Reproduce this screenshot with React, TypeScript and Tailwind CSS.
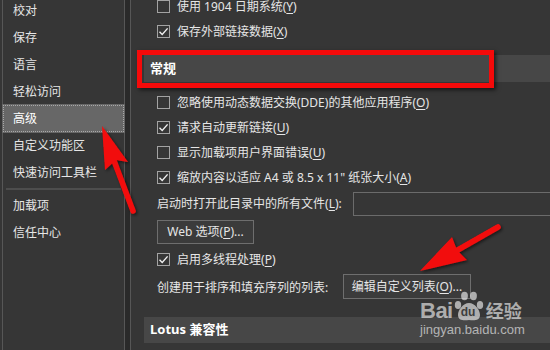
import React from "react";

const FONT = { fontFamily: '"Noto Sans", "Noto Sans CJK SC", sans-serif' };

const navItems = [
  "校对",
  "保存",
  "语言",
  "轻松访问",
  "高级",
  "自定义功能区",
  "快速访问工具栏",
  "---",
  "加载项",
  "信任中心",
];

function Check({ checked }: { checked?: boolean }) {
  return (
    <div className="flex h-[13px] w-[13px] shrink-0 items-center justify-center border border-[#a3a3a3] bg-[#363636]">
      {checked && (
        <svg width="11" height="11" viewBox="0 0 11 11">
          <path d="M1.5 5.8 L4.2 8.4 L9.6 2.4" fill="none" stroke="#f2f2f2" strokeWidth="1.4" />
        </svg>
      )}
    </div>
  );
}

function Row({
  checked,
  children,
  className = "",
}: {
  checked?: boolean;
  children: React.ReactNode;
  className?: string;
}) {
  return (
    <div className={`flex h-[25px] items-center gap-[7px] pl-[26px] ${className}`}>
      <Check checked={checked} />
      <span className="whitespace-nowrap">{children}</span>
    </div>
  );
}

function Key({ k }: { k: string }) {
  return (
    <>
      (<u className="underline-offset-2">{k}</u>)
    </>
  );
}

function SectionBar({ title, className = "" }: { title: string; className?: string }) {
  return (
    <div className={`ml-[13px] flex items-center bg-[#474747] pl-[6px] text-[13px] font-bold text-white ${className}`}>
      {title}
    </div>
  );
}

function Arrows() {
  return (
    <svg
      className="pointer-events-none absolute inset-0"
      width="550"
      height="350"
      viewBox="0 0 550 350"
    >
      <defs>
        <filter id="sh" x="-20%" y="-20%" width="140%" height="140%">
          <feDropShadow dx="1.5" dy="1.5" stdDeviation="1.5" floodColor="#000" floodOpacity="0.55" />
        </filter>
      </defs>
      <g filter="url(#sh)" fill="#f20d0d">
        <line x1="133" y1="211" x2="113" y2="158" stroke="#f20d0d" strokeWidth="5.5" strokeLinecap="round" />
        <polygon points="102,126 128,162 116,160 105,170" />
        <line x1="498" y1="227" x2="456" y2="251" stroke="#f20d0d" strokeWidth="5.5" strokeLinecap="round" />
        <polygon points="420,271 452,237 457,250 467,260" />
      </g>
    </svg>
  );
}

function Watermark() {
  return (
    <div className="pointer-events-none absolute left-[420px] top-[290px] flex flex-col text-white/60">
      <div className="flex items-end">
        <span className="text-[22px] font-bold leading-[22px] tracking-[-0.5px]" style={{ fontFamily: '"Liberation Sans", sans-serif' }}>
          Bai
        </span>
        <div className="relative h-[32px] w-[32px]">
          <svg width="32" height="32" viewBox="0 0 32 32" className="absolute inset-0">
            <g fill="rgba(255,255,255,0.6)">
              <ellipse cx="5" cy="15" rx="3.2" ry="4" />
              <ellipse cx="11.5" cy="6" rx="3.4" ry="4.2" />
              <ellipse cx="20.5" cy="6" rx="3.4" ry="4.2" />
              <ellipse cx="27" cy="15" rx="3.2" ry="4" />
              <path d="M16 13 C10 13 5 20 5 25 C5 30 10 31 16 30 C22 31 27 30 27 25 C27 20 22 13 16 13 Z" />
            </g>
          </svg>
          <span
            className="absolute left-[8px] top-[16px] text-[12px] font-bold leading-[12px] text-[#3e3e3e]"
            style={{ fontFamily: '"Liberation Sans", sans-serif' }}
          >
            du
          </span>
        </div>
        <span className="ml-[1px] text-[18px] font-bold leading-[22px]">经验</span>
      </div>
      <span className="mt-[1px] text-[13px] leading-[14px]" style={{ fontFamily: '"Liberation Sans", sans-serif' }}>
        jingyan.baidu.com
      </span>
    </div>
  );
}

export default function App() {
  return (
    <div
      className="relative flex h-[350px] w-[550px] overflow-hidden bg-[#363636] text-[12px] text-[#e6e6e6]"
      style={FONT}
    >
      {/* sidebar */}
      <div className="ml-[2px] flex w-[123px] shrink-0 flex-col border-x border-[#575757] bg-[#363636]">
        <div className="-mt-[3px]" />
        {navItems.map((item, i) =>
          item === "---" ? (
            <div key={i} className="mx-[3px] my-[2px] h-[2px] bg-[#4d4d4d]" />
          ) : item === "高级" ? (
            <div key={i} className="h-[27px]">
              <div className="flex h-[27px] items-center border border-dotted border-[#a9a9a9] bg-[#676767] pl-[9px] text-white outline outline-1 outline-[#676767]">
                {item}
              </div>
            </div>
          ) : (
            <div key={i} className="flex h-[27px] items-center pl-[10px]">
              {item}
            </div>
          )
        )}
      </div>
      <div className="w-[6px] shrink-0 border-r border-[#575757] bg-[#2a2a2a]" />

      {/* content */}
      <div className="flex min-w-0 flex-1 flex-col">
        <Row className="-mt-[6px]">
          使用 1904 日期系统<Key k="Y" />
        </Row>
        <Row checked>
          保存外部链接数据<Key k="X" />
        </Row>

        <SectionBar title="常规" className="mt-[11px] h-[27px]" />

        <Row className="mt-[8px]">
          忽略使用动态数据交换(DDE)的其他应用程序<Key k="O" />
        </Row>
        <Row checked>
          请求自动更新链接<Key k="U" />
        </Row>
        <Row>
          显示加载项用户界面错误<Key k="U" />
        </Row>
        <Row checked>
          缩放内容以适应 A4 或 8.5 x 11" 纸张大小<Key k="A" />
        </Row>

        <div className="mt-[2px] flex h-[24px] items-center pl-[26px]">
          <span className="w-[196px] shrink-0 whitespace-nowrap">
            启动时打开此目录中的所有文件<Key k="L" />:
          </span>
          <div className="h-[24px] flex-1 border border-r-0 border-[#6b6b6b] bg-[#363636]" />
        </div>

        <div className="mt-[4px] pl-[26px]">
          <div className="flex h-[24px] w-[97px] items-center justify-center border border-[#6e6e6e] bg-[#3b3b3b]">
            Web 选项<Key k="P" />...
          </div>
        </div>

        <Row checked className="mt-[3px]">
          启用多线程处理<Key k="P" />
        </Row>

        <div className="mt-[2px] flex h-[25px] items-center pl-[26px]">
          <span className="w-[186px] shrink-0 whitespace-nowrap pt-[2px]">创建用于排序和填充序列的列表:</span>
          <div className="flex h-[25px] w-[128px] items-center justify-center border border-[#6e6e6e] bg-[#3b3b3b]">
            编辑自定义列表<Key k="O" />...
          </div>
        </div>

        <SectionBar title="Lotus 兼容性" className="mt-[18px] h-[26px]" />
      </div>

      {/* annotations */}
      <div className="pointer-events-none absolute left-[137px] top-[50px] h-[38px] w-[357px] border-[5px] border-[#f50a0a] shadow-[2px_2px_4px_rgba(0,0,0,0.6)]" />
      <Arrows />
      <Watermark />
    </div>
  );
}
